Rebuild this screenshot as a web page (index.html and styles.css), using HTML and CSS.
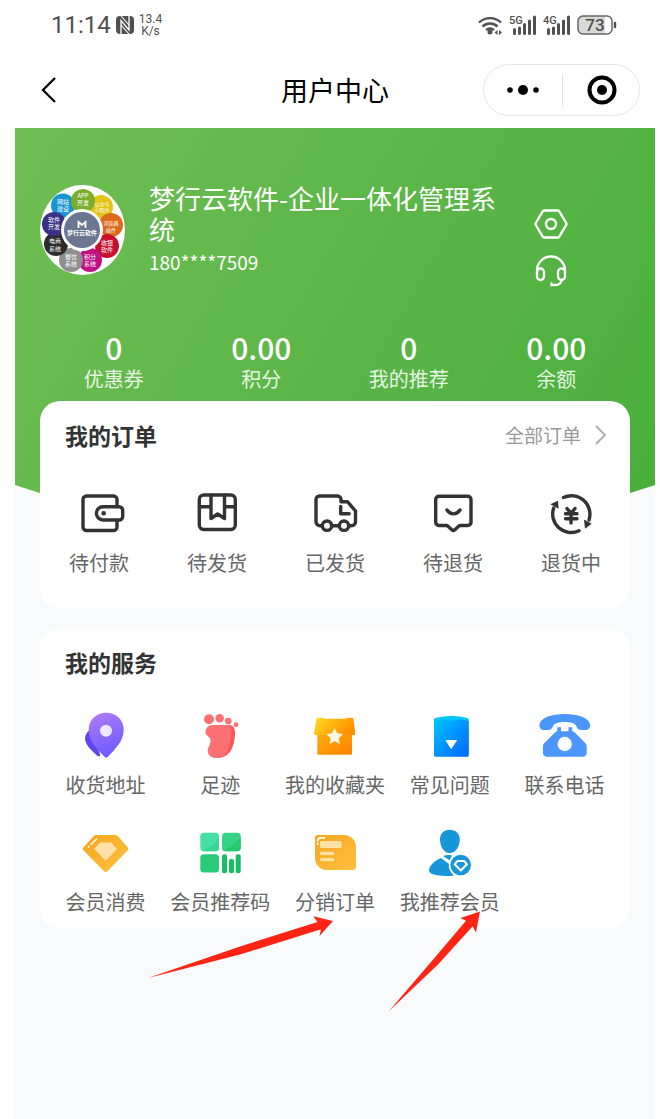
FILE: index.html
```html
<!DOCTYPE html>
<html lang="zh-CN">
<head>
<meta charset="utf-8">
<meta name="viewport" content="width=device-width, initial-scale=1">
<title>用户中心</title>
<link rel="stylesheet" href="styles.css">
</head>
<body>
<div class="status">
  <div class="status-side">
    <span class="clock">11:14</span>
    <svg class="nfc" width="18" height="18" viewBox="0 0 18 18" aria-hidden="true">
      <rect x="0" y="0" width="18" height="18" rx="4" fill="#505050"/>
      <path d="M5 18V4.500L13 14V0" fill="none" stroke="#fff" stroke-width="1.300"/>
      <path d="M5 0L13 9M5 9L13 18" fill="none" stroke="#fff" stroke-width="1.100"/>
    </svg>
    <span class="speed"><span>13.4</span><span>K/s</span></span>
  </div>
  <div class="status-side">
    <svg width="25" height="20" viewBox="0 0 25 20" aria-hidden="true">
      <g fill="none" stroke="#505050" stroke-width="2.400">
        <path d="M1 7.500a16 16 0 0 1 22 0M4.500 11.500a11 11 0 0 1 15 0M8 15a6.500 6.500 0 0 1 8 0"/>
      </g>
      <circle cx="12" cy="17" r="2.500" fill="#505050"/>
      <path d="M16.500 17.500l3-2.500v5zM24 17.500l-3-2.500v5z" fill="#505050"/>
    </svg>
    <svg width="28" height="20" viewBox="0 0 28 20" aria-hidden="true">
      <text x="0" y="9" class="net">5G</text>
      <path d="M5.500 14.500v4M10.500 13v5.500M15.500 9.500v9M20.500 6v12.500M25.500 2v16.500" stroke="#505050" stroke-width="3" stroke-linecap="round"/>
    </svg>
    <svg width="28" height="20" viewBox="0 0 28 20" aria-hidden="true">
      <text x="0" y="9" class="net">4G</text>
      <path d="M5.500 14.500v4M10.500 13v5.500M15.500 9.500v9M20.500 6v12.500M25.500 2v16.500" stroke="#505050" stroke-width="3" stroke-linecap="round"/>
    </svg>
    <svg width="40" height="20" viewBox="0 0 40 20" aria-hidden="true">
      <rect x="1" y="1" width="34" height="18" rx="5" fill="#fff"/>
      <path d="M6 1h22v18H6a5 5 0 0 1-5-5V6a5 5 0 0 1 5-5z" fill="#d8d8d8"/>
      <rect x="1" y="1" width="34" height="18" rx="5" fill="none" stroke="#666" stroke-width="1.500"/>
      <path d="M38 8v4" stroke="#505050" stroke-width="2.400" stroke-linecap="round"/>
      <text x="18" y="16" class="battery">73</text>
    </svg>
  </div>
</div>

<header class="nav">
  <button class="back" type="button" aria-label="返回">
    <svg width="16" height="28" viewBox="0 0 16 28"><path d="M14 2L2 14l12 12" fill="none" stroke="#000" stroke-width="2.300"/></svg>
  </button>
  <h1 class="nav-title">用户中心</h1>
  <div class="capsule">
    <button type="button" aria-label="更多">
      <svg width="32" height="12" viewBox="0 0 32 12"><circle cx="3" cy="6" r="2.800"/><circle cx="16" cy="6" r="5"/><circle cx="29" cy="6" r="2.800"/></svg>
    </button>
    <button type="button" aria-label="关闭">
      <svg width="30" height="30" viewBox="0 0 30 30"><circle cx="15" cy="15" r="12.500" fill="none" stroke="#000" stroke-width="4"/><circle cx="15" cy="15" r="5"/></svg>
    </button>
  </div>
</header>

<main class="page">
  <div class="backdrop"></div>

  <section class="hero">
    <div class="profile">
      <svg class="avatar" width="85" height="90" viewBox="0 0 85 90" role="img" aria-label="梦行云软件">
        <ellipse cx="42.500" cy="45" rx="42.500" ry="45" fill="#fff"/>
        <g class="bubble">
          <circle cx="23" cy="20.500" r="12" fill="#1795cf"/>
          <circle cx="61" cy="22" r="12" fill="#e3c416"/>
          <circle cx="43" cy="16" r="12" fill="#7cae2b"/>
          <circle cx="71" cy="40" r="12" fill="#db6a1c"/>
          <circle cx="67" cy="61" r="12" fill="#c8102e"/>
          <circle cx="50" cy="75" r="12" fill="#c11284"/>
          <circle cx="31" cy="75" r="12" fill="#8f8f8f"/>
          <circle cx="16" cy="59" r="12" fill="#2d2b2c"/>
          <circle cx="14" cy="39" r="12" fill="#3a3187"/>
          <circle cx="42" cy="45" r="21" fill="#fff"/>
          <circle cx="42" cy="45" r="18" fill="#6b7691"/>
          <text><tspan x="43" y="13">APP</tspan><tspan x="43" y="20">开发</tspan></text>
          <text><tspan x="23" y="19">网站</tspan><tspan x="23" y="26">建设</tspan></text>
          <text class="tiny"><tspan x="62" y="21">公众号</tspan><tspan x="62" y="27">小程序</tspan></text>
          <text class="tiny"><tspan x="71" y="40">浏览器</tspan><tspan x="71" y="47">插件</tspan></text>
          <text><tspan x="67" y="60">收银</tspan><tspan x="67" y="67">软件</tspan></text>
          <text><tspan x="50" y="74">积分</tspan><tspan x="50" y="81">系统</tspan></text>
          <text><tspan x="31" y="74">餐饮</tspan><tspan x="31" y="81">系统</tspan></text>
          <text><tspan x="15" y="58">电商</tspan><tspan x="15" y="66">系统</tspan></text>
          <text><tspan x="14" y="37">软件</tspan><tspan x="14" y="44">开发</tspan></text>
          <text x="42" y="50" class="core">梦行云软件</text>
        </g>
        <path d="M38.500 43v-6l3.500 3 3.500-3v6" fill="none" stroke="#fff" stroke-width="1.800"/>
      </svg>
      <div class="who">
        <p class="name">梦行云软件-企业一体化管理系统</p>
        <p class="phone">180****7509</p>
      </div>
      <div class="tools">
        <button type="button" aria-label="设置">
          <svg width="34" height="30" viewBox="0 0 34 30"><path d="M10 1.500h14a1.500 1.500 0 0 1 1.300.8L32.200 14a2 2 0 0 1 0 2L25.300 27.700a1.500 1.500 0 0 1-1.300.8H10a1.500 1.500 0 0 1-1.300-.8L1.800 16a2 2 0 0 1 0-2L8.700 2.300A1.500 1.500 0 0 1 10 1.500z" fill="none" stroke="#fff" stroke-width="2.400"/><circle cx="17" cy="15" r="5" fill="none" stroke="#fff" stroke-width="2.400"/></svg>
        </button>
        <button type="button" aria-label="客服">
          <svg width="34" height="32" viewBox="0 0 34 32"><g fill="none" stroke="#fff" stroke-width="2.300" stroke-linecap="round"><path d="M3 18v-2.500a14 14 0 0 1 28 0V18"/><rect x="3" y="13.500" width="7" height="11.500" rx="3.500"/><rect x="24" y="13.500" width="7" height="11.500" rx="3.500"/><path d="M27.500 25c-.3 3.500-2.800 5-6.500 5h-3.500v-1.500"/></g></svg>
        </button>
      </div>
    </div>
    <ul class="stats">
      <li><strong>0</strong><span>优惠券</span></li>
      <li><strong>0.00</strong><span>积分</span></li>
      <li><strong>0</strong><span>我的推荐</span></li>
      <li><strong>0.00</strong><span>余额</span></li>
    </ul>
  </section>

  <section class="card orders">
    <div class="card-head">
      <h2>我的订单</h2>
      <a class="more" href="#">全部订单
        <svg width="13" height="20" viewBox="0 0 13 20"><path d="M2 1l9 9-9 9" fill="none" stroke="#b0b0b0" stroke-width="2"/></svg>
      </a>
    </div>
    <nav class="order-grid">
      <a href="#">
        <svg class="line" width="52" height="44" viewBox="0 0 52 44"><path d="M44 14.500V7.500a3.500 3.500 0 0 0-3.500-3.500h-27A3.500 3.500 0 0 0 10 7.500V35a3.500 3.500 0 0 0 3.500 3.500h27A3.500 3.500 0 0 0 44 35v-6.500"/><path d="M30 14.700h16.200a3.500 3.500 0 0 1 3.500 3.500v6.300a3.500 3.500 0 0 1-3.500 3.500H30a6.650 6.650 0 0 1 0-13.300z"/><circle class="solid" cx="30.700" cy="21.200" r="2.300"/></svg>
        <span>待付款</span>
      </a>
      <a href="#">
        <svg class="line" width="52" height="44" viewBox="0 0 52 44"><rect x="8.300" y="3" width="36" height="34.500" rx="4.500"/><path d="M20 3v23.500l6.700-4.500 6.800 4.500V3M8.300 14.700H20M33.500 14.700h10.800"/></svg>
        <span>待发货</span>
      </a>
      <a href="#">
        <svg class="line" width="52" height="44" viewBox="0 0 52 44"><path d="M13.500 33.700H11a4 4 0 0 1-4-4V7.500A3.500 3.500 0 0 1 10.500 4h18A3.500 3.500 0 0 1 32 7.500v2.200h6.500l8 9.300v10.700a4 4 0 0 1-4 4h-3M22.500 33.700h8"/><circle cx="18" cy="33.700" r="4.700"/><circle cx="35" cy="33.700" r="4.700"/><path d="M31.700 14.500v7.300h8.500"/></svg>
        <span>已发货</span>
      </a>
      <a href="#">
        <svg class="line" width="52" height="44" viewBox="0 0 52 44"><path d="M12 4.300h28.700a3.300 3.300 0 0 1 3.300 3.300v22.600a3.300 3.300 0 0 1-3.300 3.300H32.500l-4.700 4.200a2.200 2.200 0 0 1-3 0l-4.700-4.200H12a3.300 3.300 0 0 1-3.300-3.300V7.600A3.300 3.300 0 0 1 12 4.300z"/><path d="M20 18c3.500 5.200 9.500 5.200 13 0"/></svg>
        <span>待退货</span>
      </a>
      <a href="#">
        <svg class="line" width="52" height="44" viewBox="0 0 52 44"><path d="M18.500 5.500A18.500 18.500 0 0 1 44 28M34 38.800A18.500 18.500 0 0 1 8.700 16M22 16.500l4 4.800 4-4.800M26 21.300v9.700M20.500 21.800h11.500M20.500 26.800h11.500"/><path class="solid" d="M39 27.500l7.700 4.200-6.700 5zM5.300 12.300L13 8.700l.7 8z"/></svg>
        <span>退货中</span>
      </a>
    </nav>
  </section>

  <section class="card services">
    <div class="card-head"><h2>我的服务</h2></div>
    <nav class="service-grid">
      <a href="#">
        <svg width="52" height="52" viewBox="0 0 52 52">
          <defs><linearGradient id="pin" x1="0" y1="0" x2=".3" y2="1"><stop offset="0" stop-color="#b47cf8"/><stop offset="1" stop-color="#6f5cff"/></linearGradient></defs>
          <path d="M12 19c-4 3-6 6-6 9 0 7 7 13 12.500 18 1 .7 2 .3 3-.5z" fill="#6047ea"/>
          <path d="M27.200 2.700c9.800 0 17.500 7 17.500 17.300 0 10.500-8 18.500-15.500 26.500-1.500 1.500-2.500 1.500-4 0C17.700 38.500 9.700 30.500 9.700 20c0-10.300 7.700-17.300 17.500-17.300z" fill="url(#pin)"/>
          <circle cx="27" cy="20.700" r="6" fill="#efe6ff"/>
        </svg>
        <span>收货地址</span>
      </a>
      <a href="#">
        <svg width="52" height="52" viewBox="0 0 52 52">
          <g fill="#ff7073"><circle cx="15" cy="9.300" r="5"/><circle cx="25.700" cy="8.300" r="4.200"/><circle cx="34.300" cy="11" r="3.300"/><circle cx="42" cy="14.700" r="2.400"/></g>
          <path d="M20 15h15c5 0 6.500 5 6 10-.7 8-3 23-17.500 23-7 0-11.500-5-9-10 1.500-3.500 3.500-6.500 1.500-10-1.500-2.500-5-3-4.300-7 .7-4 4.300-6 8.300-6z" fill="#ff5454"/>
          <path d="M20 15h12c4.500 0 6 4 5.500 9-.7 8-2.500 24-14 24-7 0-11.500-5-9-10 1.500-3.500 3.500-6.500 1.500-10-1.500-2.500-5-3-4.300-7 .7-4 4.300-6 8.300-6z" fill="#ff7073"/>
        </svg>
        <span>足迹</span>
      </a>
      <a href="#">
        <svg width="52" height="52" viewBox="0 0 52 52">
          <defs><linearGradient id="lid" x1="0" y1="0" x2="1" y2=".4"><stop offset="0" stop-color="#ffdc23"/><stop offset="1" stop-color="#ff9200"/></linearGradient><linearGradient id="crate" x1="0" y1="0" x2="1" y2="1"><stop offset="0" stop-color="#ffae0a"/><stop offset="1" stop-color="#ff8200"/></linearGradient></defs>
          <path d="M8.300 22H43v21.500a1.200 1.200 0 0 1-1.200 1.200H9.500a1.200 1.200 0 0 1-1.200-1.200z" fill="url(#crate)"/>
          <path d="M9 7.700h5l1.500 1h20.500l1.500-1h5.500a1.500 1.500 0 0 1 1.500 1.300l1.800 14.500a1.500 1.500 0 0 1-1.500 1.500H6.500A1.500 1.500 0 0 1 5 23.500L7.500 9A1.500 1.500 0 0 1 9 7.700z" fill="url(#lid)"/>
          <path d="M25.700 18l2.600 5.300 5.700.8-4.200 4.100 1.100 5.800-5.200-2.800-5.200 2.800 1.100-5.800-4.200-4.100 5.700-.8z" fill="#fff5e4"/>
        </svg>
        <span>我的收藏夹</span>
      </a>
      <a href="#">
        <svg width="52" height="52" viewBox="0 0 52 52">
          <defs><linearGradient id="book" x1="0" y1="0" x2="1" y2="1"><stop offset="0" stop-color="#00c8ff"/><stop offset=".5" stop-color="#0093ff"/><stop offset="1" stop-color="#0067ff"/></linearGradient></defs>
          <path d="M10 10c0-1 .5-1.800 1.500-2C21 5.300 34 5.300 43.200 8c1 .2 1.500 1 1.500 2v34H10z" fill="#00c4f8"/>
          <path d="M11 11c3-1 6-1.700 9-2l1.500 1.500h11L34.500 9c4 .5 7 1.200 10.200 2.200v34a1.500 1.500 0 0 1-1.500 1.500H11.500a1.500 1.500 0 0 1-1.500-1.500V11z" fill="url(#book)"/>
          <path d="M22 30.500h10.500l-5.300 8z" fill="#fff" stroke="#fff" stroke-linejoin="round"/>
        </svg>
        <span>常见问题</span>
      </a>
      <a href="#">
        <svg width="52" height="52" viewBox="0 0 52 52">
          <path d="M.5 14C2 7.500 13 4 25.700 4S49.500 7.500 51 14c.5 3.500-1 6-4.500 6h-4.500c-2.500 0-3.500-1.500-4.500-3.500-1.500-3.500-6-4.500-11.800-4.500s-10.300 1-11.800 4.500c-1 2-2 3.500-4.500 3.500H5C1.500 20 0 17.500.5 14z" fill="#4c97fb"/>
          <path fill-rule="evenodd" d="M18.300 17.300H22v4h7.500v-4h3.700v4c1.500.3 2.300 1 3.300 2l10 10c.8.800 1.200 1.700 1.200 2.700v7a3.500 3.500 0 0 1-3.500 3.700H7.500A3.500 3.500 0 0 1 4 43v-7c0-1 .4-1.900 1.200-2.700l10-10c1-1 1.600-1.700 3.100-2zM25.700 26.800a7.200 7.200 0 1 0 0 14.400 7.200 7.200 0 0 0 0-14.400z" fill="#4c97fb"/>
        </svg>
        <span>联系电话</span>
      </a>
      <a href="#">
        <svg width="52" height="52" viewBox="0 0 52 52">
          <defs><linearGradient id="gold" x1="0" y1="0" x2="1" y2="1"><stop offset="0" stop-color="#f5a71f"/><stop offset="1" stop-color="#ffbf3f"/></linearGradient></defs>
          <path d="M17 8h19.500c1 0 1.800.4 2.500 1.200L48.800 20.500c.7.900.7 2-.1 2.800L28.500 44.200c-1 1-2.500 1-3.500 0L4.300 23.300c-.8-.8-.8-1.900-.1-2.800L14.500 9.200C15.200 8.400 16 8 17 8z" fill="url(#gold)"/>
          <path d="M21 16h11.300l5.200 6-10.800 11.300L15.700 22z" fill="#ffe2ab" stroke="#ffe2ab" stroke-linejoin="round"/>
          <path d="M12 17.500l5.500-5.500M9.500 20l.5-.5" stroke="#fff" stroke-width="1.600" stroke-linecap="round"/>
        </svg>
        <span>会员消费</span>
      </a>
      <a href="#">
        <svg width="52" height="52" viewBox="0 0 52 52">
          <rect x="6.300" y="5.700" width="18.700" height="18.500" rx="3.500" fill="#45dfa6"/><path d="M8 23.500C15 21 22 17 25 12v8.700a3.500 3.500 0 0 1-3.500 3.500H9.800z" fill="#36d68f"/>
          <rect x="28" y="5.700" width="18.700" height="18.500" rx="3.500" fill="#36d387"/><path d="M29 23.500C38 20 44 14 46.700 9v11.700a3.500 3.500 0 0 1-3.500 3.500H31.500z" fill="#27c96c"/>
          <rect x="6.300" y="27.300" width="18.700" height="18.200" rx="3.500" fill="#2acb77"/>
          <g fill="#17be63"><rect x="28" y="27.300" width="5" height="19" rx="2"/><rect x="35" y="32" width="5" height="14.300" rx="2"/><rect x="41.700" y="27.300" width="5" height="19" rx="2"/></g>
        </svg>
        <span>会员推荐码</span>
      </a>
      <a href="#">
        <svg width="52" height="52" viewBox="0 0 52 52">
          <path d="M9 8h26a12 12 0 0 1 12 12v20a3 3 0 0 1-3 3H18A12 12 0 0 1 6 31V11a3 3 0 0 1 3-3z" fill="url(#gold)"/>
          <g fill="#ffe0a6"><rect x="11" y="14" width="21.700" height="7" rx="1.500"/><rect x="11" y="24.700" width="14.300" height="3.300" rx="1.500"/><rect x="11" y="31" width="14.300" height="3.300" rx="1.500"/></g>
          <path d="M8.800 13.500c0-2 .7-2.700 3-2.700h3.500M8.800 16.500v.5" fill="none" stroke="#fff" stroke-width="1.800" stroke-linecap="round"/>
        </svg>
        <span>分销订单</span>
      </a>
      <a href="#">
        <svg width="52" height="52" viewBox="0 0 52 52">
          <path d="M25.800 2.700c6 0 10 3.800 10 9.800 0 7-4 13.500-10 13.500s-9.800-6.500-9.800-13.500c0-6 3.800-9.800 9.800-9.800z" fill="#1797da"/>
          <path d="M17 31l8 6 1.500 4 3 7.700C19 49.500 11 48.500 7 46.500 4.500 45 4.800 41.500 6.500 39c2.500-3.500 6-6.300 10.500-8z" fill="#1797da"/>
          <path d="M19 29c3-1 6-1.200 9-.5l-2 5z" fill="#1797da"/>
          <circle cx="36.700" cy="38" r="12" fill="#fff"/>
          <circle cx="36.700" cy="38" r="10.300" fill="#1797da"/>
          <path d="M33.500 34h6.700l2.800 3.300-6.200 6.200-6.200-6.200z" fill="none" stroke="#fff" stroke-width="2" stroke-linejoin="round"/>
        </svg>
        <span>我推荐会员</span>
      </a>
    </nav>
    <svg class="pointers" width="340" height="102" viewBox="0 0 340 102" aria-hidden="true">
      <path d="M0 68L92 36.500 169.500 12l-4.200-5.700L185 11l-13.500 15L173 19.300 92 44.500z" fill="#ff2414"/>
      <path d="M241 101L286 48.500 318 10.800 312.500 8 332 1.500 328 22.500 324.700 16.300 290 54.500z" fill="#ff2414"/>
    </svg>
  </section>
</main>
</body>
</html>
```
FILE: styles.css
```css
* { box-sizing: border-box; }

body {
  margin: 0;
  padding: 0 5px 0 15px;
  min-height: 100vh;
  display: flex;
  flex-direction: column;
  background: #fff;
  color: #333;
  font-family: "Noto Sans CJK SC", sans-serif;
}

h1, h2, p, ul { margin: 0; padding: 0; }
ul { list-style: none; }
a { color: inherit; text-decoration: none; }
svg { display: block; flex: none; }
button { padding: 0; border: 0; background: none; cursor: pointer; }

.status {
  display: flex;
  justify-content: space-between;
  align-items: center;
  height: 50px;
  padding: 0 38px 0 36px;
  color: #505050;
  font-family: Roboto, sans-serif;
}
.status-side { display: flex; align-items: center; gap: 6px; }
.status-side:first-child { gap: 5px; }
.clock { font-size: 24px; line-height: 28px; }
.speed {
  display: flex;
  flex-direction: column;
  align-items: center;
  font-size: 12px;
  line-height: 12px;
}
.net { font: 500 11px Roboto, sans-serif; fill: #505050; }
.battery { font: 500 17px Roboto, sans-serif; fill: #505050; text-anchor: middle; }

.nav {
  display: grid;
  grid-template-columns: 1fr auto 1fr;
  align-items: center;
  height: 78px;
  padding: 2px 15px 0 26px;
}
.back { justify-self: start; }
.nav-title { margin-right: 11px; font-size: 27px; font-weight: 400; line-height: 40px; color: #000; }
.capsule {
  justify-self: end;
  display: grid;
  grid-template-columns: 1fr 1fr;
  width: 157px;
  height: 52px;
  border: 1px solid #e6e6e6;
  border-radius: 26px;
}
.capsule button { display: flex; align-items: center; justify-content: center; }
.capsule button + button {
  padding-left: 4px;
  background: linear-gradient(#e2e2e2, #e2e2e2) left center / 1px 32px no-repeat;
}

.page {
  position: relative;
  flex: 1;
  padding: 0 25px 60px;
  background: #f8fafc;
}
.backdrop {
  position: absolute;
  inset: 0 0 auto;
  height: 460px;
  background: linear-gradient(120deg, #70be53, #5bb647 50%, #46ae39);
  clip-path: polygon(0 0, 100% 0, 100% 357px, 50% 100%, 0 357px);
}
.hero { position: relative; padding: 54px 0 8px; color: #fff; }
.profile { display: flex; align-items: flex-start; }
.avatar { margin-top: 3px; }
.bubble text {
  font-size: 6px;
  fill: #fff;
  text-anchor: middle;
}
.bubble .tiny { font-size: 5px; }
.bubble .core { font-size: 6px; font-weight: 700; }
.who { flex: 1; margin: 0 20px 0 24px; }
.name { font-size: 26px; line-height: 31px; }
.phone { font-size: 19px; line-height: 36px; }
.tools {
  display: flex;
  flex-direction: column;
  gap: 16px;
  margin: 27px 62px 0 0;
}
.stats { display: grid; grid-template-columns: repeat(4, 1fr); margin-top: 42px; text-align: center; }
.stats strong { display: block; font-size: 30px; font-weight: 500; line-height: 36px; }
.stats span { display: block; font-size: 20px; line-height: 28px; opacity: 0.85; }

.card { position: relative; background: #fff; border-radius: 20px; }
.card-head {
  display: flex;
  justify-content: space-between;
  align-items: center;
  padding: 0 23px 0 25px;
  line-height: 28px;
}
.card-head h2 { font-size: 23px; font-weight: 700; }
.more { display: flex; align-items: center; gap: 13px; font-size: 19px; color: #999; }

.orders { padding: 20px 0 31px; }
.order-grid { display: grid; grid-template-columns: repeat(5, 1fr); margin-top: 43px; }
.order-grid a,
.service-grid a {
  display: flex;
  flex-direction: column;
  align-items: center;
  font-size: 20px;
  line-height: 28px;
  white-space: nowrap;
  color: #666;
}
.order-grid a { gap: 13px; }
.line { fill: none; stroke: #333; stroke-width: 3.4; stroke-linecap: round; stroke-linejoin: round; }
.line .solid { fill: #333; stroke: none; }

.services { margin-top: 21px; padding: 19px 8px 12px; }
.services .card-head { padding: 0 17px; }
.service-grid {
  display: grid;
  grid-template-columns: repeat(5, 1fr);
  row-gap: 28px;
  margin-top: 34px;
}
.service-grid a { gap: 9px; }

.pointers { position: absolute; left: 108px; top: 281px; pointer-events: none; }
```
